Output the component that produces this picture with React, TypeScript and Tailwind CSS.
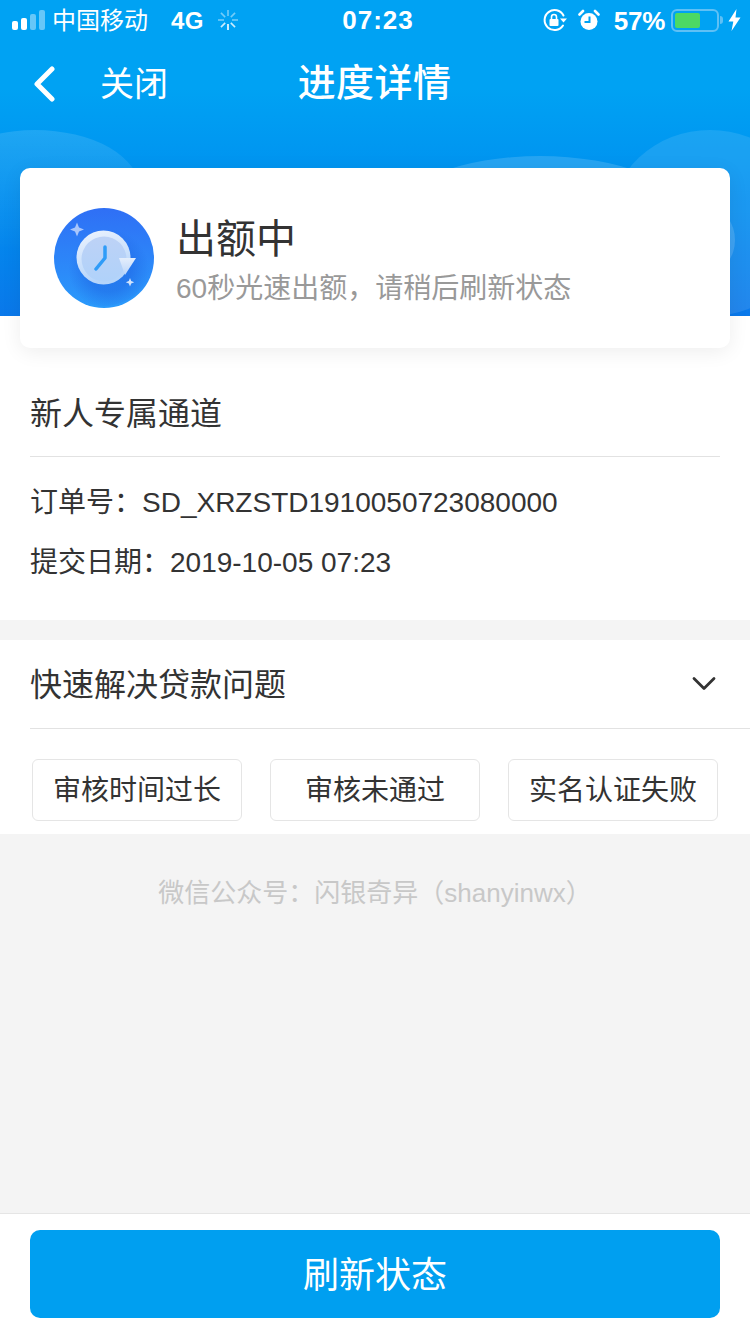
import React from 'react';

const FONT = "font-['Liberation_Sans','Noto_Sans_CJK_SC',sans-serif]";

function SignalBars() {
  return (
    <div className="flex items-end gap-[3px]">
      <span className="w-[6px] h-[9px] rounded-[2px] bg-white" />
      <span className="w-[6px] h-[12px] rounded-[2px] bg-white" />
      <span className="w-[6px] h-[16px] rounded-[2px] bg-white/40" />
      <span className="w-[6px] h-[20px] rounded-[2px] bg-white/40" />
    </div>
  );
}

function Spinner() {
  const lines = [0, 45, 90, 135, 180, 225, 270, 315];
  return (
    <svg width="22" height="22" viewBox="0 0 22 22">
      {lines.map((a, i) => (
        <line
          key={a}
          x1="11"
          y1="1"
          x2="11"
          y2="7"
          stroke="#fff"
          strokeWidth="1.6"
          strokeOpacity={i === 4 ? 1 : i === 3 || i === 5 ? 0.8 : 0.45}
          transform={`rotate(${a} 11 11)`}
        />
      ))}
    </svg>
  );
}

function RotationLock() {
  return (
    <svg width="24" height="24" viewBox="0 0 24 24" fill="none">
      <path d="M20.500 7.500A10 10 0 1 0 20 17.500" stroke="#fff" strokeWidth="2" strokeLinecap="round" />
      <path d="M17 10.500h7l-3.500 4z" fill="#fff" />
      <rect x="6.500" y="11" width="9" height="7" rx="1" fill="#fff" />
      <path d="M8.500 11.500V9a2.500 2.500 0 0 1 5 0v2.500" stroke="#fff" strokeWidth="1.600" />
    </svg>
  );
}

function AlarmClock() {
  return (
    <svg width="22" height="22" viewBox="0 0 22 22" fill="none">
      <circle cx="11" cy="12.500" r="8.500" fill="#fff" />
      <path d="M11.500 7.500v5.500H6.500" stroke="#00a2f3" strokeWidth="2" />
      <path d="M1.500 5.500l3.500-3.500M20.500 5.500L17 2" stroke="#fff" strokeWidth="2.600" strokeLinecap="round" />
    </svg>
  );
}

function Battery() {
  return (
    <div className="flex items-center">
      <div className="w-[48px] h-[23px] rounded-[6px] border-2 border-[#5fc0f5] p-[2px]">
        <div className="w-[25px] h-full rounded-[2px] bg-[#4cd964]" />
      </div>
      <span className="ml-[1px] w-[3px] h-[8px] rounded-r-[3px] bg-[#5fc0f5]" />
    </div>
  );
}

function Bolt() {
  return (
    <svg width="13" height="22" viewBox="0 0 13 22">
      <path d="M8.500 0L0.500 12.500h4.800L3.500 22l9-13.500H7.500z" fill="#fff" />
    </svg>
  );
}

function StatusBar() {
  return (
    <div className="relative h-[40px] flex items-center justify-between pl-[12px] pr-[9px] text-white">
      <div className="flex items-center">
        <SignalBars />
        <span className="ml-[7px] text-[24px] leading-[44px] pt-[1px]">中国移动</span>
        <span className="ml-[23px] text-[24px] leading-[44px] pt-[1px] font-bold tracking-[0.5px]">4G</span>
        <span className="ml-[13px] flex"><Spinner /></span>
      </div>
      <div className="flex items-center">
        <RotationLock />
        <span className="ml-[11px]"><AlarmClock /></span>
        <span className="ml-[14px] text-[26px] leading-[44px] pt-[1px] font-bold tracking-[-0.3px]">57%</span>
        <span className="ml-[6px]"><Battery /></span>
        <span className="ml-[5px]"><Bolt /></span>
      </div>
      <span className="absolute left-[6px] right-0 text-center text-[26px] leading-[44px] font-bold tracking-[1px]">07:23</span>
    </div>
  );
}

function ClockBadge() {
  return (
    <svg width="100" height="100" viewBox="0 0 100 100" className="shrink-0">
      <defs>
        <linearGradient id="badge" x1="0" y1="0" x2="0" y2="1">
          <stop offset="0" stopColor="#2f6ff5" />
          <stop offset="1" stopColor="#2a9afb" />
        </linearGradient>
        <radialGradient id="shade" cx="0.55" cy="0.62" r="0.42">
          <stop offset="0.55" stopColor="#1c5fe0" stopOpacity="0.45" />
          <stop offset="1" stopColor="#1c5fe0" stopOpacity="0" />
        </radialGradient>
        <linearGradient id="ring" x1="0" y1="0" x2="0.3" y2="1">
          <stop offset="0" stopColor="#eef4fe" />
          <stop offset="1" stopColor="#b4d4fa" />
        </linearGradient>
        <linearGradient id="face" x1="0" y1="0" x2="0" y2="1">
          <stop offset="0" stopColor="#bdd2f6" />
          <stop offset="1" stopColor="#b0d2fa" />
        </linearGradient>
        <linearGradient id="arrow" x1="0" y1="0" x2="0" y2="1">
          <stop offset="0" stopColor="#e4eefc" />
          <stop offset="1" stopColor="#bcd6fa" />
        </linearGradient>
      </defs>
      <circle cx="50" cy="50" r="50" fill="url(#badge)" />
      <circle cx="50" cy="50" r="48" fill="url(#shade)" />
      <circle cx="49.500" cy="49.500" r="27" fill="url(#ring)" />
      <circle cx="50" cy="51" r="22.500" fill="url(#face)" />
      <path d="M65 50h17L71 67z" fill="url(#arrow)" />
      <path d="M51 39v11L42 61" stroke="#2f9cf8" strokeWidth="3.500" strokeLinecap="round" strokeLinejoin="round" fill="none" />
      <path d="M23 14.500l2 5 5 2-5 2-2 5-2-5-5-2 5-2z" fill="#a9c6fb" />
      <path d="M76 70l1.200 3 3 1.200-3 1.200-1.200 3-1.200-3-3-1.200 3-1.200z" fill="#d3e4fc" />
    </svg>
  );
}

function Hills() {
  return (
    <>
      <div className="absolute left-[-70px] top-[130px] w-[210px] h-[120px] rounded-[50%] bg-gradient-to-b from-white/12 to-transparent" />
      <div className="absolute left-[395px] top-[156px] w-[290px] h-[120px] rounded-[50%] bg-white/15" />
      <div className="absolute left-[610px] top-[130px] w-[200px] h-[186px] rounded-[50%] bg-white/10" />
      <div className="absolute left-[690px] top-[210px] w-[45px] h-[60px] rounded-[50%] bg-white/15" />
    </>
  );
}

function Header() {
  return (
    <header className="relative h-[316px] overflow-hidden bg-gradient-to-b from-[#00a2f3] from-[28%] to-[#0a78ea] text-white">
      <Hills />
      <StatusBar />
      <nav className="relative h-[86px] flex items-center">
        <svg width="26" height="36" viewBox="0 0 26 36" className="ml-[32px] mt-[2px]" fill="none">
          <path d="M20 3L5 18l15 15" stroke="#fff" strokeWidth="5" strokeLinecap="round" strokeLinejoin="round" />
        </svg>
        <span className="ml-[42px] pt-[2px] text-[34px]">关闭</span>
        <h1 className="absolute left-0 right-[1px] text-center text-[38px] tracking-[0.4px] font-medium">进度详情</h1>
      </nav>
    </header>
  );
}

function StatusCard() {
  return (
    <section className="relative mx-[20px] mt-[-148px] h-[180px] rounded-[10px] bg-white shadow-[0_4px_20px_rgba(0,0,0,0.07)] flex items-center pl-[34px]">
      <ClockBadge />
      <div className="ml-[22px] mt-[5px]">
        <div className="text-[40px] leading-[56px] text-[#333]">出额中</div>
        <div className="text-[28px] leading-[44px] text-[#999]">60秒光速出额，请稍后刷新状态</div>
      </div>
    </section>
  );
}

function OrderInfo() {
  return (
    <section className="px-[30px] h-[272px]">
      <h2 className="h-[109px] pt-[42px] text-[32px] leading-[48px] text-[#333] border-b border-[#e2e2e2]">新人专属通道</h2>
      <p className="mt-[24px] text-[28px] leading-[44px] text-[#333]">订单号：SD_XRZSTD1910050723080000</p>
      <p className="mt-[16px] text-[28px] leading-[44px] text-[#333]">提交日期：2019-10-05 07:23</p>
    </section>
  );
}

function QuickHelp() {
  const tags = ['审核时间过长', '审核未通过', '实名认证失败'];
  return (
    <section className="mt-[20px] h-[194px] bg-white pl-[30px]">
      <div className="h-[89px] flex items-center justify-between pr-[34px] border-b border-[#e2e2e2]">
        <h2 className="text-[32px] leading-[48px] pt-[2px] text-[#333]">快速解决贷款问题</h2>
        <svg width="24" height="16" viewBox="0 0 24 16" fill="none">
          <path d="M2 2.500l10 10 10-10" stroke="#333" strokeWidth="2.800" strokeLinecap="round" strokeLinejoin="round" />
        </svg>
      </div>
      <div className="mt-[30px] ml-[2px] flex gap-[28px]">
        {tags.map((tag) => (
          <button
            key={tag}
            className="w-[210px] h-[62px] pt-[2px] rounded-[6px] border border-[#e5e5e5] text-[28px] text-[#333] flex items-center justify-center"
          >
            {tag}
          </button>
        ))}
      </div>
    </section>
  );
}

export default function App() {
  return (
    <div className={`${FONT} w-[750px] h-[1334px] bg-[#f4f4f4] flex flex-col overflow-hidden`}>
      <Header />
      <div className="bg-white">
        <StatusCard />
        <OrderInfo />
      </div>
      <QuickHelp />
      <main className="flex-1 pt-[39px] text-center text-[26px] leading-[40px] text-[#c8c8c8]">
        微信公众号：闪银奇异（shanyinwx）
      </main>
      <footer className="h-[121px] bg-white border-t border-[#e5e5e5] px-[30px] pt-[16px]">
        <button className="w-full h-[88px] pt-[3px] rounded-[10px] bg-[#009ff0] text-white text-[36px]">刷新状态</button>
      </footer>
    </div>
  );
}
